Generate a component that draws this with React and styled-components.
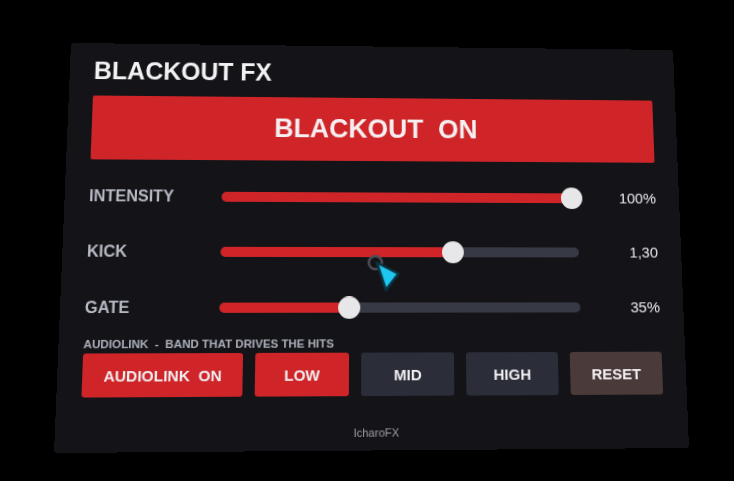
import styled, { createGlobalStyle } from 'styled-components';

const GlobalStyle = createGlobalStyle`
  html, body {
    margin: 0;
    padding: 0;
    background: #000;
  }
`;

// maps the flat panel onto the tilted quad seen in the headset capture
function quadMatrix(w, h, quad) {
  const [[x0, y0], [x1, y1], [x2, y2], [x3, y3]] = quad;
  const dx1 = x1 - x2;
  const dx2 = x3 - x2;
  const dx3 = x0 - x1 + x2 - x3;
  const dy1 = y1 - y2;
  const dy2 = y3 - y2;
  const dy3 = y0 - y1 + y2 - y3;
  const den = dx1 * dy2 - dx2 * dy1;
  const g = (dx3 * dy2 - dx2 * dy3) / den;
  const k = (dx1 * dy3 - dx3 * dy1) / den;
  const a = x1 - x0 + g * x1;
  const b = x3 - x0 + k * x3;
  const d = y1 - y0 + g * y1;
  const e = y3 - y0 + k * y3;
  return `matrix3d(${a / w},${d / w},0,${g / w},${b / h},${e / h},0,${k / h},0,0,1,0,${x0},${y0},0,1)`;
}

const PANEL_W = 620;
const PANEL_H = 404;
const PANEL_MATRIX = quadMatrix(PANEL_W, PANEL_H, [
  [0, 0],
  [602, 7],
  [618, 405],
  [-17, 410],
]);

const RED = '#cf2528';

const Stage = styled.div`
  width: 734px;
  height: 481px;
  box-sizing: border-box;
  padding: 43px 0 0 71px;
  background: #000;
  overflow: hidden;
`;

const Panel = styled.div`
  position: relative;
  width: ${PANEL_W}px;
  height: ${PANEL_H}px;
  box-sizing: border-box;
  padding: 16px 24px 0;
  display: flex;
  flex-direction: column;
  background: #141418;
  border-radius: 3px;
  transform-origin: 0 0;
  transform: ${PANEL_MATRIX};
  font-family: 'Liberation Sans', Arial, sans-serif;
`;

const Title = styled.h1`
  margin: 0;
  font-size: 25px;
  line-height: 25px;
  font-weight: 700;
  color: #f1f1f4;
`;

const MainButton = styled.div`
  margin-top: 13px;
  height: 65px;
  display: flex;
  align-items: center;
  justify-content: center;
  background: ${RED};
  border-radius: 2px;
  color: #f4eef0;
  font-size: 27px;
  font-weight: 700;
  white-space: pre;
`;

const Sliders = styled.div`
  margin-top: 9px;
  display: flex;
  flex-direction: column;
`;

const SliderRow = styled.div`
  height: 55px;
  display: grid;
  grid-template-columns: 131px 360px 1fr;
  align-items: center;
`;

const Label = styled.span`
  font-size: 16px;
  font-weight: 700;
  color: #b7bac4;
`;

const Track = styled.div`
  position: relative;
  height: 10px;
  border-radius: 5px;
  background: #373a45;
`;

const Fill = styled.div`
  position: absolute;
  left: 0;
  top: 0;
  bottom: 0;
  width: calc(6px + ${(p) => p.$value} * (100% - 12px));
  border-radius: 5px;
  background: ${RED};
`;

const Thumb = styled.div`
  position: absolute;
  top: 50%;
  left: calc(6px + ${(p) => p.$value} * (100% - 12px));
  width: 22px;
  height: 22px;
  border-radius: 50%;
  background: #e7e7e9;
  transform: translate(-50%, -50%);
`;

const Value = styled.span`
  text-align: right;
  font-size: 15px;
  color: #ececf0;
`;

const SectionLabel = styled.div`
  margin-top: 2px;
  font-size: 11.3px;
  line-height: 12px;
  font-weight: 700;
  color: #adb0ba;
  white-space: pre;
`;

const ButtonRow = styled.div`
  margin-top: 3px;
  height: 42px;
  display: grid;
  grid-template-columns: 155px 92px 92px 92px 93px;
  gap: 12px;
`;

const buttonColors = {
  red: RED,
  dark: '#2b2d39',
  reset: '#4a3a3a',
};

const BandButton = styled.div`
  display: flex;
  align-items: center;
  justify-content: center;
  border-radius: 3px;
  background: ${(p) => buttonColors[p.$variant]};
  color: #f1eff1;
  font-size: 15px;
  font-weight: 700;
  white-space: pre;
`;

const Footer = styled.div`
  margin-top: 29px;
  text-align: center;
  font-size: 11px;
  line-height: 13px;
  color: #9d9da5;
`;

const Pointer = styled.svg`
  position: absolute;
  left: 296px;
  top: 210px;
  width: 40px;
  height: 40px;
  overflow: visible;
`;

const sliders = [
  { name: 'INTENSITY', value: 1, text: '100%' },
  { name: 'KICK', value: 0.65, text: '1,30' },
  { name: 'GATE', value: 0.35, text: '35%' },
];

const bands = [
  { name: 'AUDIOLINK  ON', variant: 'red' },
  { name: 'LOW', variant: 'red' },
  { name: 'MID', variant: 'dark' },
  { name: 'HIGH', variant: 'dark' },
  { name: 'RESET', variant: 'reset' },
];

export default function App() {
  return (
    <Stage>
      <GlobalStyle />
      <Panel>
        <Title>BLACKOUT FX</Title>
        <MainButton>BLACKOUT  ON</MainButton>

        <Sliders>
          {sliders.map((s) => (
            <SliderRow key={s.name}>
              <Label>{s.name}</Label>
              <Track>
                <Fill $value={s.value} />
                <Thumb $value={s.value} />
              </Track>
              <Value>{s.text}</Value>
            </SliderRow>
          ))}
        </Sliders>

        <SectionLabel>AUDIOLINK  -  BAND THAT DRIVES THE HITS</SectionLabel>
        <ButtonRow>
          {bands.map((b) => (
            <BandButton key={b.name} $variant={b.variant}>
              {b.name}
            </BandButton>
          ))}
        </ButtonRow>

        <Footer>IcharoFX</Footer>

        {/* headset laser pointer */}
        <Pointer viewBox="0 0 40 40">
          <circle cx="13" cy="11.5" r="6.5" fill="none" stroke="#4b4e57" strokeWidth="2.5" />
          <path
            d="M14.5 11.5 L36 22.5 L23.5 38.5 Z"
            fill="#1fc6ef"
            stroke="#0b3441"
            strokeWidth="2.5"
            strokeLinejoin="round"
          />
        </Pointer>
      </Panel>
    </Stage>
  );
}
